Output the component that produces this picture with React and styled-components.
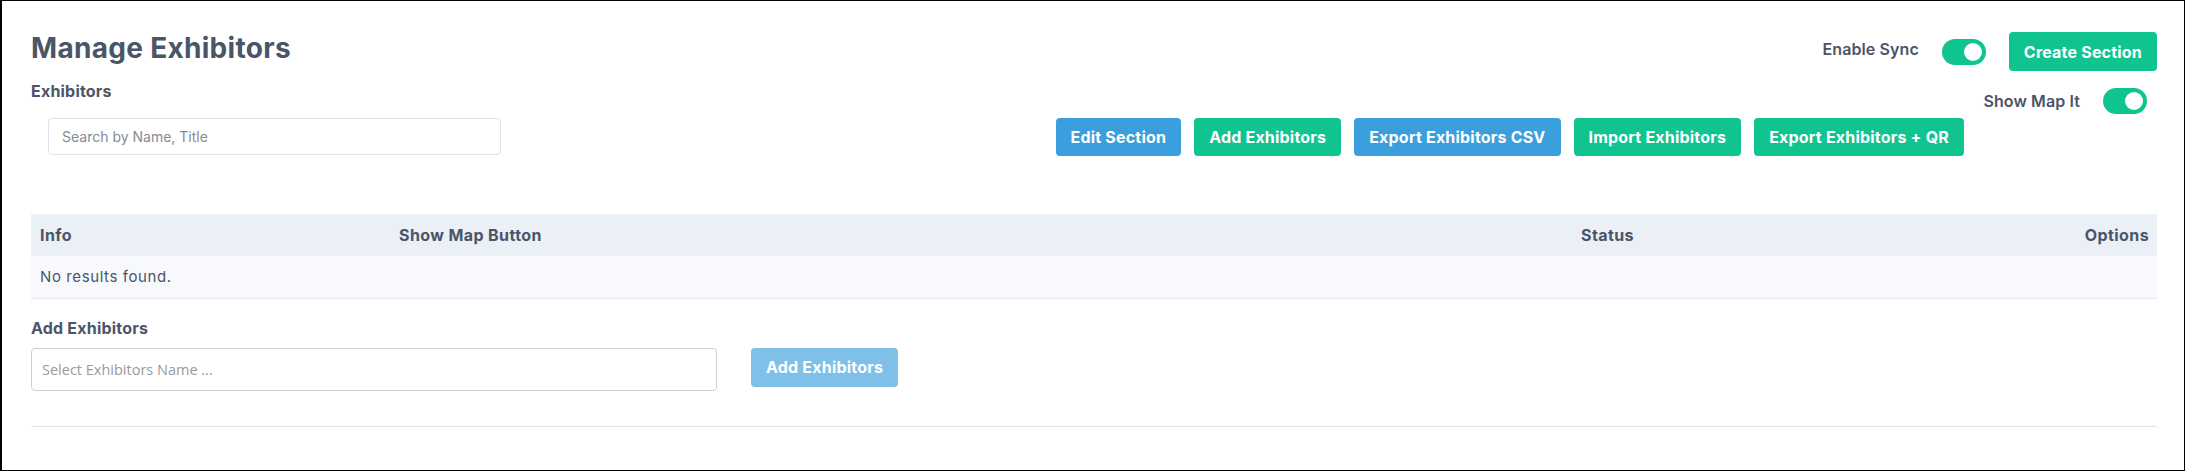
import React from "react";
import styled, { createGlobalStyle } from "styled-components";

const GlobalStyle = createGlobalStyle`
  *, *::before, *::after { box-sizing: border-box; }
  html, body { margin: 0; padding: 0; background: #ffffff; }
  body { font-family: Inter, "Noto Sans", sans-serif; color: #4a5568; }
`;

const Frame = styled.div`
  width: 2185px;
  height: 471px;
  border: 1px solid #000;
  border-left-width: 2px;
  background: #fff;
  padding: 30px 27px 0 29px;
  display: flex;
  flex-direction: column;
`;

const TopBar = styled.div`
  display: flex;
  justify-content: space-between;
  align-items: flex-start;
`;

const Title = styled.h1`
  margin: 0;
  font-size: 28px;
  line-height: 34px;
  font-weight: 700;
  letter-spacing: 0.3px;
  color: #4a5568;
`;

const SyncGroup = styled.div`
  display: flex;
  align-items: center;
  gap: 23px;
  margin-top: 1px;
`;

const SwitchLabel = styled.span`
  font-size: 16px;
  font-weight: 600;
  line-height: 20px;
  letter-spacing: 0.1px;
  color: #4a5568;
  margin-bottom: ${(p) => (p.$raise ? "5px" : "0")};
`;

const Toggle = styled.span`
  position: relative;
  display: inline-block;
  width: 44px;
  height: 26px;
  border-radius: 13px;
  background: #10c48f;
  flex-shrink: 0;

  &::after {
    content: "";
    position: absolute;
    top: 4px;
    right: 4px;
    width: 18px;
    height: 18px;
    border-radius: 50%;
    background: #fff;
  }
`;

const Button = styled.button`
  border: none;
  border-radius: 4px;
  height: ${(p) => p.$h || 38}px;
  padding: 0 15px;
  font-family: Inter, "Noto Sans", sans-serif;
  font-size: 16px;
  font-weight: 700;
  letter-spacing: 0.2px;
  color: #fff;
  white-space: nowrap;
  cursor: pointer;
  background: ${(p) =>
    p.$variant === "blue" ? "#3a9fdc" : p.$variant === "muted" ? "#7ec0e8" : "#10c48f"};
`;

const ToolRow = styled.div`
  display: flex;
  justify-content: space-between;
  align-items: flex-start;
  margin-top: 10px;
`;

const LeftCol = styled.div`
  display: flex;
  flex-direction: column;
`;

const SectionLabel = styled.label`
  font-size: 16px;
  font-weight: 700;
  line-height: 20px;
  letter-spacing: 0.2px;
  color: #4a5568;
`;

const SearchInput = styled.input`
  margin: 17px 0 0 17px;
  width: 453px;
  height: 37px;
  border: 1px solid #dce3ec;
  border-radius: 4px;
  padding: 0 13px;
  font-family: Inter, "Noto Sans", sans-serif;
  font-size: 14px;
  color: #4a5568;
  outline: none;

  &::placeholder { color: #868b94; }
`;

const RightCol = styled.div`
  display: flex;
  flex-direction: column;
  align-items: flex-end;
`;

const MapRow = styled.div`
  display: flex;
  align-items: center;
  gap: 23px;
  margin: 7px 10px 0 0;
`;

const ActionRow = styled.div`
  display: flex;
  gap: 13px;
  margin: 4px 193px 0 0;
`;

const Table = styled.table`
  margin-top: 58px;
  width: 100%;
  border-collapse: collapse;
  table-layout: fixed;
`;

const HeadCell = styled.th`
  height: 42px;
  padding: 0 8px 0 9px;
  background: #ebeff6;
  font-size: 16px;
  font-weight: 700;
  letter-spacing: 0.4px;
  color: #4a5568;
  text-align: ${(p) => (p.$right ? "right" : "left")};
  width: ${(p) => (p.$w ? `${p.$w}px` : "auto")};
`;

const EmptyCell = styled.td`
  height: 42px;
  padding: 0 9px;
  background: #f8f9fd;
  border-bottom: 1px solid #e7eaf0;
  font-size: 15px;
  letter-spacing: 0.6px;
  color: #4a5568;
  font-weight: 400;
`;

const AddLabel = styled(SectionLabel)`
  margin-top: 19px;
`;

const AddRow = styled.div`
  display: flex;
  align-items: flex-start;
  gap: 34px;
  margin-top: 10px;
`;

const SelectBox = styled.input`
  width: 686px;
  height: 43px;
  border: 1px solid #cfcfcf;
  border-radius: 4px;
  padding: 0 10px;
  font-family: "Open Sans", "Noto Sans", sans-serif;
  font-size: 14.5px;
  outline: none;

  &::placeholder { color: #9a9a9a; }
`;

const Divider = styled.hr`
  margin: 35px 0 0;
  border: none;
  border-top: 1px solid #e3e3e3;
`;

export default function App() {
  return (
    <>
      <GlobalStyle />
      <Frame>
        <TopBar>
          <Title>Manage Exhibitors</Title>
          <SyncGroup>
            <SwitchLabel $raise>Enable Sync</SwitchLabel>
            <Toggle />
            <Button $h={39}>Create Section</Button>
          </SyncGroup>
        </TopBar>

        <ToolRow>
          <LeftCol>
            <SectionLabel>Exhibitors</SectionLabel>
            <SearchInput placeholder="Search by Name, Title" />
          </LeftCol>
          <RightCol>
            <MapRow>
              <SwitchLabel>Show Map It</SwitchLabel>
              <Toggle />
            </MapRow>
            <ActionRow>
              <Button $variant="blue">Edit Section</Button>
              <Button>Add Exhibitors</Button>
              <Button $variant="blue">Export Exhibitors CSV</Button>
              <Button>Import Exhibitors</Button>
              <Button>Export Exhibitors + QR</Button>
            </ActionRow>
          </RightCol>
        </ToolRow>

        <Table>
          <thead>
            <tr>
              <HeadCell $w={359}>Info</HeadCell>
              <HeadCell $w={1182}>Show Map Button</HeadCell>
              <HeadCell $w={290}>Status</HeadCell>
              <HeadCell $right>Options</HeadCell>
            </tr>
          </thead>
          <tbody>
            <tr>
              <EmptyCell colSpan={4}>No results found.</EmptyCell>
            </tr>
          </tbody>
        </Table>

        <AddLabel>Add Exhibitors</AddLabel>
        <AddRow>
          <SelectBox placeholder="Select Exhibitors Name ..." />
          <Button $variant="muted" $h={39}>Add Exhibitors</Button>
        </AddRow>

        <Divider />
      </Frame>
    </>
  );
}
